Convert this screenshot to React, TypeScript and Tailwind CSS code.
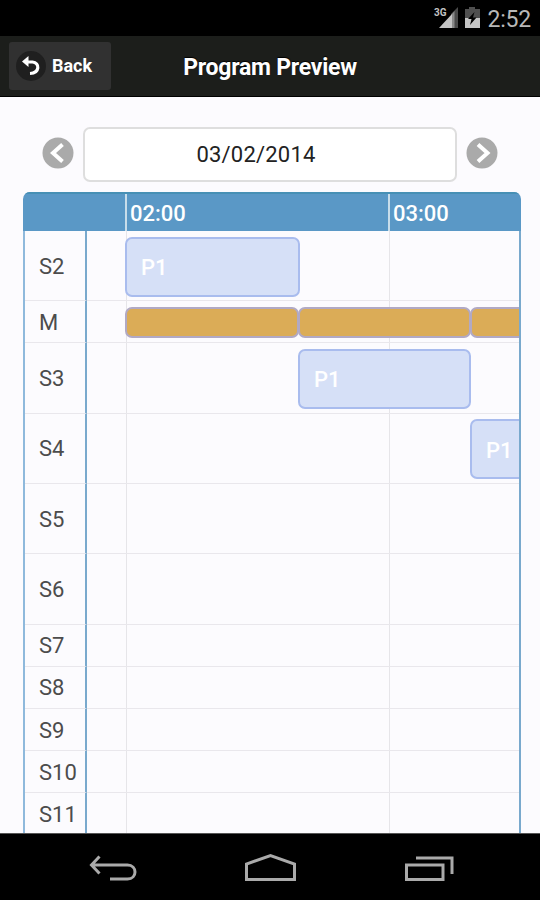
type Block = { left: number; width: number; label?: string }
type Row = { name: string; tall?: boolean; blocks?: Block[] }

const rows: Row[] = [
  { name: "S2", tall: true, blocks: [{ left: 39, width: 175, label: "P1" }] },
  { name: "M", blocks: [{ left: 39, width: 174 }, { left: 212, width: 173 }, { left: 384, width: 174 }] },
  { name: "S3", tall: true, blocks: [{ left: 212, width: 173, label: "P1" }] },
  { name: "S4", tall: true, blocks: [{ left: 384, width: 174, label: "P1" }] },
  { name: "S5", tall: true },
  { name: "S6", tall: true },
  { name: "S7" },
  { name: "S8" },
  { name: "S9" },
  { name: "S10" },
  { name: "S11" },
]

const StatusBar = () => (
  <div className="flex h-9 shrink-0 items-center justify-end bg-black pr-[9px] text-[#b8b8b8]">
    <svg width="50" height="36" viewBox="0 0 50 36" className="mr-[5px]">
      <path d="M19 14L26 7V28H19Z" fill="#4a4a4a" />
      <path d="M7 28L20 14V28Z" fill="#c4c4c4" />
      <path d="M20 14L22.500 11V28H20Z" fill="#8a8a8a" />
      <text x="2" y="16" fontSize="11" fontWeight="700" fill="#c4c4c4" fontFamily="Roboto, sans-serif" textLength="12.500" lengthAdjust="spacingAndGlyphs">3G</text>
      <path d="M33 9H37V7H43V9H48V18H33Z" fill="#4f4f4f" />
      <path d="M33 18H48V28H33Z" fill="#c4c4c4" />
      <path d="M42.500 12L36 19H39.500L38 25L44.500 17.500H41Z" fill="#000" />
    </svg>
    <span className="mt-[2px] text-[23px] leading-none tracking-[-0.2px]">2:52</span>
  </div>
)

const Header = () => (
  <div className="grid h-[61px] shrink-0 grid-cols-[1fr_auto_1fr] items-center border-b border-black bg-[#1c1e1b] text-white [text-shadow:0_-1px_1px_#000]">
    <button className="ml-[9px] flex h-12 w-[102px] items-center rounded-[3px] bg-[#313131] pl-[7px]">
      <span className="flex size-[30px] items-center justify-center rounded-full bg-[#1f1f1f]">
        <svg width="20" height="22" viewBox="0 0 20 22" fill="none">
          <path d="M5 7H11.500C19 7.500 19 18 9 18.500" stroke="#fff" strokeWidth="3.200" />
          <path d="M1 6.500L7.500 1V12Z" fill="#fff" />
        </svg>
      </span>
      <span className="ml-[6px] text-[18px] leading-none font-bold">Back</span>
    </button>
    <h1 className="mt-[3px] text-[23px] leading-none font-bold tracking-[-0.25px]">Program Preview</h1>
    <span />
  </div>
)

const Arrow = ({ d }: { d: string }) => (
  <svg width="32" height="32" viewBox="0 0 32 32" fill="none" className="mb-[4px]">
    <circle cx="16" cy="16" r="15.500" fill="#aaa" />
    <path d={d} stroke="#fff" strokeWidth="4" />
  </svg>
)

const DatePicker = () => (
  <div className="mt-[30px] ml-[42px] flex h-[55px] items-center">
    <Arrow d="M20.500 7.500L11 16L20.500 24.500" />
    <div className="mx-[9px] flex h-[55px] w-[374px] items-center justify-center rounded-[7px] border-2 border-[#dedede] bg-white pr-[28px]">
      <span className="text-[22px] leading-none tracking-[0.2px] text-[#222]">03/02/2014</span>
    </div>
    <Arrow d="M12 7.500L21.500 16L12 24.500" />
  </div>
)

const TimelineRow = ({ name, tall, blocks = [] }: Row) => (
  <div className={tall ? "flex h-[70.3px] shrink-0" : "flex h-[42.2px] shrink-0"}>
    <div className="flex w-[62px] shrink-0 items-center border-r-2 border-b border-r-[#79a9cd] border-b-[#e9e7ec] pl-[14px]">
      <span className="mt-[2px] text-[22px] leading-none text-[#4c4c4c]">{name}</span>
    </div>
    <div className="relative flex grow border-b border-[#e9e7ec]">
      <div className="w-[40px] border-r border-[#e6e5e9]" />
      <div className="w-[263px] border-r border-[#e6e5e9]" />
      {blocks.map((block) => (
        <div
          key={block.left}
          className={
            block.label
              ? "absolute top-[5.500px] flex h-[60px] items-center rounded-[7px] border-2 border-[#a9bcee] bg-[#d6e0f7] pl-[14px]"
              : "absolute top-[6px] h-[31px] rounded-[7px] border-2 border-[#b1a9c4] bg-[#dbac57]"
          }
          style={{ left: block.left - 1, width: block.width }}
        >
          {block.label && <span className="mt-[3px] text-[22px] leading-none font-medium text-white">{block.label}</span>}
        </div>
      ))}
    </div>
  </div>
)

const Timeline = () => (
  <div className="mt-[10px] mr-[19px] ml-[23px] flex min-h-0 grow flex-col overflow-hidden rounded-t-[7px]">
    <div className="flex h-[39px] shrink-0 border-t-2 border-[#4790b5] bg-[#5a98c6] text-[22px] font-medium text-white">
      <div className="w-[102px]" />
      <div className="flex w-[263px] items-center border-l-2 border-[#c8ddea] pt-[3px] pl-[3px] leading-none">02:00</div>
      <div className="flex grow items-center border-l-2 border-[#c8ddea] pt-[3px] pl-[3px] leading-none">03:00</div>
    </div>
    <div className="flex min-h-0 grow flex-col overflow-hidden border-r-2 border-l-2 border-r-[#79a9cd] border-l-[#8fb9dc]">
      {rows.map((row) => (
        <TimelineRow key={row.name} {...row} />
      ))}
    </div>
  </div>
)

const NavBar = () => (
  <div className="flex h-[67px] shrink-0 border-t border-[#555] bg-black">
    <svg width="540" height="66" viewBox="0 0 540 66" fill="none" stroke="#aaa" strokeWidth="3">
      <path d="M92 31H127.500C137.500 31 137.500 45 127.500 45H110M99.500 22.500L91.500 31L99.500 39.500" />
      <path d="M246.500 45.500V30L270.500 21.500L294.500 30V45.500Z" />
      <path d="M406.500 31H443V45.500H406.500ZM416 24H452V40" />
    </svg>
  </div>
)

const App = () => {
  return (
    <div className="flex h-[900px] w-[540px] flex-col overflow-hidden bg-[#fcfbfe] font-[Roboto,sans-serif]">
      <StatusBar />
      <Header />
      <DatePicker />
      <Timeline />
      <NavBar />
    </div>
  )
}

export default App
